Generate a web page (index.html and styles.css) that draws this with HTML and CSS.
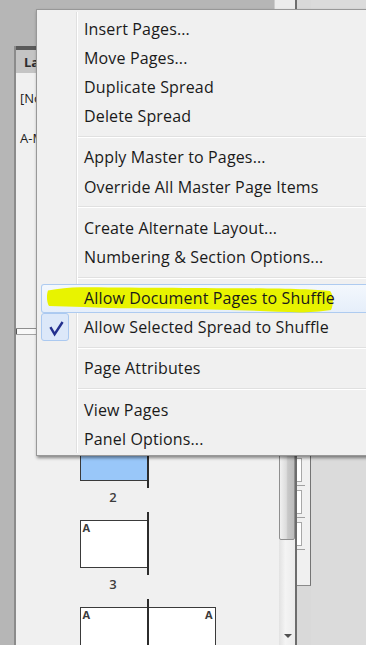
FILE: index.html
```html
<!DOCTYPE html>
<html>
<head>
<meta charset="utf-8">
<link rel="stylesheet" href="styles.css">
</head>
<body>
<div class="screen">
  <div class="desk-left"></div>
  <div class="pages-col">
    <div class="topgap"><div class="topgap-knob"></div></div>
    <div class="panel">
      <div class="panel-strip"></div>
      <div class="panel-head"><span class="tab">Layers</span></div>
      <div class="panel-body">
        <div class="panel-main">
          <div class="masters">
            <div class="master-row">[None]</div>
            <div class="master-row">A-Master</div>
          </div>
          <div class="splitter"></div>
          <div class="pages">
            <div class="spread">
              <div class="slot"><div class="pg pg-l pg-sel"></div></div>
              <div class="spine"></div>
              <div class="slot"></div>
            </div>
            <div class="num-row"><div class="num">2</div></div>
            <div class="spread">
              <div class="slot"><div class="pg pg-l">A</div></div>
              <div class="spine"></div>
              <div class="slot"></div>
            </div>
            <div class="num-row"><div class="num">3</div></div>
            <div class="spread">
              <div class="slot"><div class="pg pg-l">A</div></div>
              <div class="spine"></div>
              <div class="slot"><div class="pg pg-r">A</div></div>
            </div>
          </div>
        </div>
        <div class="vscroll">
          <div class="thumb"></div>
          <div class="sb-fill"></div>
          <div class="sb-down"><span class="tri"></span></div>
        </div>
      </div>
    </div>
  </div>
  <div class="side-col">
    <div class="side-strip">
      <div class="side-list">
        <div class="sbox"></div><div class="stick"></div>
        <div class="sbox"></div><div class="stick"></div>
        <div class="sbox"></div><div class="stick"></div>
      </div>
    </div>
  </div>
  <div class="desk-right"></div>

  <div class="menu">
    <div class="item"><span class="ico"></span><span class="lbl">Insert Pages...</span></div>
    <div class="item"><span class="ico"></span><span class="lbl">Move Pages...</span></div>
    <div class="item"><span class="ico"></span><span class="lbl">Duplicate Spread</span></div>
    <div class="item"><span class="ico"></span><span class="lbl">Delete Spread</span></div>
    <div class="sep"></div>
    <div class="item"><span class="ico"></span><span class="lbl">Apply Master to Pages...</span></div>
    <div class="item"><span class="ico"></span><span class="lbl">Override All Master Page Items</span></div>
    <div class="sep"></div>
    <div class="item"><span class="ico"></span><span class="lbl">Create Alternate Layout...</span></div>
    <div class="item"><span class="ico"></span><span class="lbl">Numbering &amp; Section Options...</span></div>
    <div class="sep"></div>
    <div class="item hot">
      <svg class="marker" viewBox="0 0 287 27" width="287" height="27">
        <path d="M2 4.5 C12 2.5 24 1.5 34 1.2 C80 1.5 150 2 200 2.3 C240 2.6 270 3.5 284 5 C287.5 8 287.5 20 285 24 C275 25.5 262 26.5 254 26.5 C220 25 180 23.5 137 23 C110 22.8 90 22.5 74 22.3 C50 21.5 25 20.5 3 20 C0.5 16 0.5 8.5 2 4.5 Z" fill="#e8f300"/>
      </svg>
      <span class="ico"></span><span class="lbl">Allow Document Pages to Shuffle</span>
    </div>
    <div class="item"><span class="ico on"><svg viewBox="0 0 27 27" width="27" height="27"><path d="M8.4 13.2 L12.6 20.2 L20.6 8" fill="none" stroke="#23308e" stroke-width="2.4" stroke-linejoin="miter"/></svg></span><span class="lbl">Allow Selected Spread to Shuffle</span></div>
    <div class="sep"></div>
    <div class="item"><span class="ico"></span><span class="lbl">Page Attributes</span></div>
    <div class="sep"></div>
    <div class="item"><span class="ico"></span><span class="lbl">View Pages</span></div>
    <div class="item"><span class="ico"></span><span class="lbl">Panel Options...</span></div>
  </div>
</div>
</body>
</html>
```

FILE: styles.css
```css
html, body {
  margin: 0;
  padding: 0;
}
body {
  width: 366px;
  height: 645px;
  overflow: hidden;
  font-family: "Open Sans", "Noto Sans", sans-serif;
}
.screen {
  position: relative;
  display: flex;
  width: 366px;
  height: 645px;
  overflow: hidden;
  background: #b6b6b6;
}
.desk-left {
  width: 14px;
  flex: none;
}
.pages-col {
  width: 281px;
  flex: none;
  display: flex;
  flex-direction: column;
}
.topgap {
  height: 46px;
  flex: none;
  display: flex;
  justify-content: flex-end;
}
.topgap-knob {
  width: 20px;
  height: 9px;
  background: #ececec;
  border-left: 1px solid #cdcdcd;
}
.panel {
  flex: 1;
  min-height: 0;
  display: flex;
  flex-direction: column;
  border-left: 2px solid #8b8b8b;
}
.panel-strip {
  height: 4px;
  flex: none;
  background: #5a5a5a;
}
.panel-head {
  height: 23px;
  flex: none;
  display: flex;
  align-items: center;
  padding-left: 8px;
  background: #c4c4c4;
}
.tab {
  font-size: 13px;
  font-weight: 700;
  color: #2e2e2e;
}
.panel-body {
  flex: 1;
  min-height: 0;
  display: flex;
}
.panel-main {
  flex: 1;
  background: #f0f0f0;
  display: flex;
  flex-direction: column;
  overflow: hidden;
}
.masters {
  height: 255px;
  flex: none;
  padding-top: 5px;
  box-sizing: border-box;
}
.master-row {
  height: 40px;
  display: flex;
  align-items: center;
  padding-left: 4px;
  font-size: 13px;
  color: #1c1c1c;
}
.splitter {
  position: relative;
  height: 5px;
  flex: none;
  background: #f8f8f8;
  border-top: 1px solid #8e8e8e;
  border-bottom: 1px solid #a4a4a4;
}
.splitter::before {
  content: "";
  position: absolute;
  left: -1px;
  top: 0;
  width: 2px;
  height: 5px;
  background: #555;
}
.pages {
  padding-top: 90px;
  display: flex;
  flex-direction: column;
  align-items: center;
}
.spread {
  display: flex;
  height: 63px;
  flex: none;
}
.slot {
  width: 67px;
  padding-top: 8px;
  box-sizing: border-box;
}
.pg {
  height: 48px;
  box-sizing: border-box;
  border: 1px solid #3a3a3a;
  background: #fff;
  padding: 0 2px;
  font-size: 11px;
  line-height: 13px;
  font-weight: 700;
  color: #3b3b3b;
}
.pg-l {
  border-right: none;
}
.pg-r {
  border-left: none;
  text-align: right;
}
.pg-sel {
  background: #99c7f9;
}
.spine {
  width: 2px;
  height: 63px;
  background: #2c2c2c;
}
.num-row {
  display: flex;
  width: 136px;
  height: 24px;
  flex: none;
}
.num {
  width: 67px;
  text-align: center;
  font-size: 13px;
  line-height: 19px;
  font-weight: 600;
  color: #3c3c3c;
}
.vscroll {
  width: 16px;
  flex: none;
  display: flex;
  flex-direction: column;
  background: linear-gradient(to right, #e2e2e2, #f4f4f4 40%, #ebebeb);
}
.thumb {
  margin-top: 17px;
  height: 450px;
  flex: none;
  box-sizing: border-box;
  border: 1px solid #8f8f8f;
  border-radius: 2px;
  background: linear-gradient(to right, #f0f0f0, #dcdcdc 45%, #c8c8c8 55%, #bcbcbc);
}
.sb-fill {
  flex: 1;
}
.sb-down {
  height: 18px;
  flex: none;
  display: flex;
  align-items: center;
  justify-content: center;
}
.tri {
  width: 0;
  height: 0;
  margin-left: 2px;
  border-left: 4px solid transparent;
  border-right: 4px solid transparent;
  border-top: 4px solid #505050;
}
.side-col {
  width: 16px;
  flex: none;
  box-sizing: border-box;
  border-left: 2px solid #6d6d6d;
  background: #d9d9d9;
  display: flex;
  flex-direction: column;
}
.side-strip {
  margin-top: 46px;
  height: 540px;
  flex: none;
  box-sizing: border-box;
  background: #f0f0f0;
  border-right: 1px solid #747474;
  border-bottom: 1px solid #8a8a8a;
}
.side-list {
  padding-top: 412px;
}
.sbox {
  width: 5px;
  height: 24px;
  box-sizing: border-box;
  background: #fff;
  border: 1px solid #a8a8a8;
  border-left: none;
}
.stick {
  width: 8px;
  height: 1px;
  margin: 3px 0 4px;
  background: #a0a0a0;
}
.desk-right {
  flex: 1;
  background: #dbdbdb;
}

/* context menu */
.menu {
  position: absolute;
  left: 36px;
  top: 9px;
  width: 345px;
  box-sizing: border-box;
  padding: 4px 0 2px 4px;
  background: #f0f0f0;
  border: 1px solid #989898;
  box-shadow: 1px 2px 3px rgba(0, 0, 0, 0.45);
}
.menu::before {
  content: "";
  position: absolute;
  left: 39px;
  top: 2px;
  bottom: 2px;
  width: 1px;
  background: #e0e0e0;
  box-shadow: 1px 0 0 #ffffff;
}
.item {
  position: relative;
  height: 29.2px;
  display: flex;
  align-items: center;
  font-size: 16px;
  letter-spacing: 0.15px;
  color: #1a1a1a;
}
.ico {
  width: 28px;
  height: 28px;
  flex: none;
  margin-right: 15px;
  box-sizing: border-box;
}
.ico.on {
  border: 1px solid #abc9f0;
  border-radius: 3px;
  background: #dce8f9;
}
.ico svg {
  display: block;
}
.lbl {
  position: relative;
  z-index: 1;
  white-space: nowrap;
}
.hot {
  border-radius: 3px;
  background: linear-gradient(#f4f8fd, #e5eefa);
  box-shadow: inset 0 0 0 1px #aecbf0;
}
.marker {
  position: absolute;
  left: 5px;
  top: 2px;
}
.sep {
  height: 1px;
  margin: 5px 0 5px 37px;
  background: #e0e0e0;
  border-bottom: 1px solid #ffffff;
}
```
